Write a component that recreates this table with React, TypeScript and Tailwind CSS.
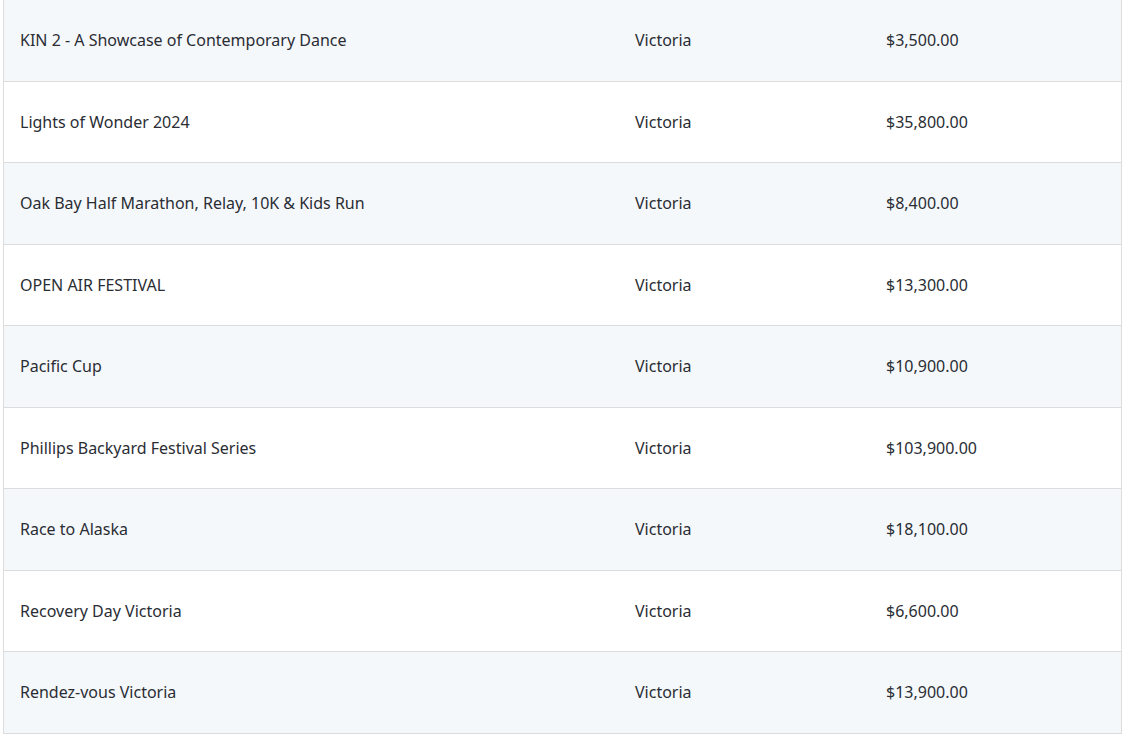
import React from 'react';

const rows = [
  { name: 'KIN 2 - A Showcase of Contemporary Dance', city: 'Victoria', amount: '$3,500.00' },
  { name: 'Lights of Wonder 2024', city: 'Victoria', amount: '$35,800.00' },
  { name: 'Oak Bay Half Marathon, Relay, 10K & Kids Run', city: 'Victoria', amount: '$8,400.00' },
  { name: 'OPEN AIR FESTIVAL', city: 'Victoria', amount: '$13,300.00' },
  { name: 'Pacific Cup', city: 'Victoria', amount: '$10,900.00' },
  { name: 'Phillips Backyard Festival Series', city: 'Victoria', amount: '$103,900.00' },
  { name: 'Race to Alaska', city: 'Victoria', amount: '$18,100.00' },
  { name: 'Recovery Day Victoria', city: 'Victoria', amount: '$6,600.00' },
  { name: 'Rendez-vous Victoria', city: 'Victoria', amount: '$13,900.00' },
];

export default function App() {
  return (
    <div className="bg-white h-[735px] overflow-hidden pl-[3px] pr-[1px] font-['Noto_Sans',sans-serif] text-[16px] text-[#2a2d34]">
      <div className="border-x border-[#dcdcdc]">
        {rows.map((r, i) => (
          <div
            key={i}
            className={`grid grid-cols-[615px_251px_1fr] items-center h-[81.5px] border-b border-[#dcdcdc] ${
              i % 2 === 0 ? 'bg-[#f5f8fb]' : 'bg-white'
            }`}
          >
            <div className="pl-4">{r.name}</div>
            <div className="pl-4">{r.city}</div>
            <div className="pl-4">{r.amount}</div>
          </div>
        ))}
      </div>
    </div>
  );
}
